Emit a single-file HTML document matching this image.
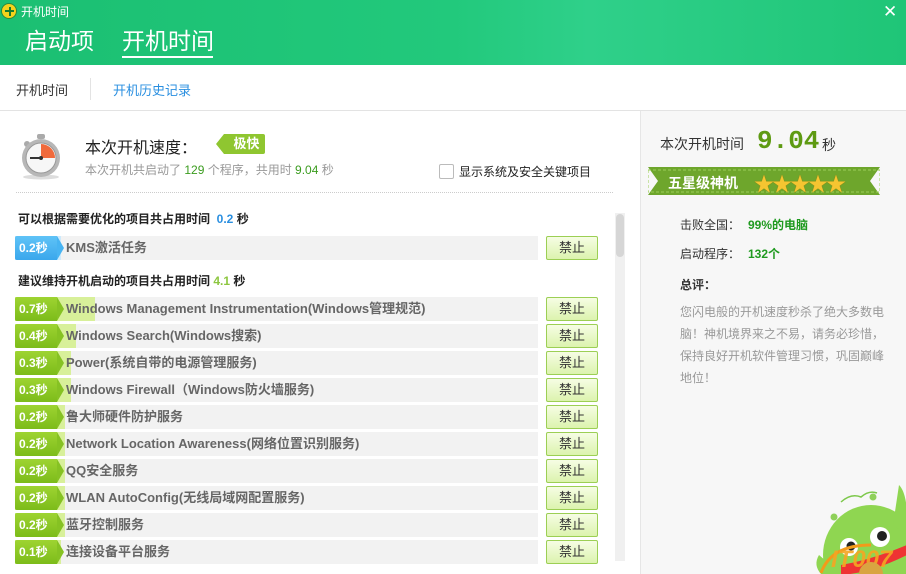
<!DOCTYPE html>
<html><head><meta charset="utf-8"><style>
*{margin:0;padding:0;box-sizing:border-box}
html,body{width:906px;height:574px;overflow:hidden}
body{background:#fff;font-family:"Liberation Sans","Microsoft YaHei","Noto Sans CJK SC",sans-serif;position:relative;color:#333}
.hdr{position:absolute;left:0;top:0;width:906px;height:65px;background:linear-gradient(90deg,#1bbf72 0%,#22c97c 50%,#2fd08a 65%,#1fc577 100%)}
.abs{position:absolute}
.sub{position:absolute;top:65px;left:0;width:906px;height:46px;border-bottom:1px solid #e3e3e3;background:#fff}
.right{position:absolute;left:640px;top:111px;width:266px;height:463px;background:#f7f7f7;border-left:1px solid #e6e6e6;overflow:hidden}
.row{position:absolute;left:15px;width:523px;height:24px;background:#f2f2f2}
.ext{position:absolute;left:0;top:0;height:24px;background:#d8f09a}
.badge{position:absolute;left:0;top:0;width:42px;height:24px;background:linear-gradient(#9ed432,#7cbc1a);color:#fff;font-weight:bold;font-size:12px;line-height:24px;padding-left:4px;border-radius:2px 0 0 2px}
.badge:after{content:"";position:absolute;right:-7px;top:0;border-left:7px solid #86c223;border-top:12px solid transparent;border-bottom:12px solid transparent}
.row .t{position:absolute;left:51px;top:0;line-height:24px;font-size:13px;font-weight:bold;color:#666;white-space:nowrap}
.btn{position:absolute;left:546px;width:52px;height:24px;border:1px solid #9ccf54;background:linear-gradient(#f6fde4,#dcf3ae);font-size:13px;text-align:center;line-height:22px;color:#333;border-radius:2px}
.blue .badge{background:linear-gradient(#5fc3f7,#3aa7ec)}
.blue .badge:after{border-left-color:#48b4f2}
.blue .ext{background:#cdeafc}
</style></head><body>
<div class="hdr"></div>
<div class="abs" style="left:1px;top:3px;width:16px;height:16px;border-radius:50%;background:#f4d21d;border:1px solid #2a8a3a"></div>
<div class="abs" style="left:5px;top:10px;width:9px;height:2px;background:#1a7b2c"></div>
<div class="abs" style="left:8.5px;top:6.5px;width:2px;height:9px;background:#1a7b2c"></div>
<div class="abs" style="left:21px;top:3px;font-size:12px;color:#fff">开机时间</div>
<div class="abs" style="left:883px;top:3px;font-size:17px;color:#fff;line-height:17px">✕</div>
<div class="abs" style="left:25px;top:27px;font-size:23px;line-height:28px;color:#fff">启动项</div>
<div class="abs" style="left:122px;top:27px;font-size:23px;line-height:28px;color:#fff">开机时间</div>
<div class="abs" style="left:122px;top:56px;width:91px;height:2px;background:#fff"></div>
<div class="sub">
<div class="abs" style="left:16px;top:15px;font-size:13px;color:#333">开机时间</div>
<div class="abs" style="left:90px;top:13px;width:1px;height:22px;background:#e3e3e3"></div>
<div class="abs" style="left:113px;top:15px;font-size:13px;color:#2a8fe0">开机历史记录</div>
</div>
<svg class="abs" style="left:18px;top:130px" width="46" height="50" viewBox="0 0 46 50">
<ellipse cx="23" cy="47" rx="18" ry="2.5" fill="#ddd"/>
<rect x="19" y="4" width="8" height="5" rx="2" fill="#aaa"/>
<circle cx="9" cy="14" r="3" fill="#aaa"/>
<circle cx="23" cy="28" r="19" fill="#b7b7b7"/>
<circle cx="23" cy="28" r="15" fill="#f7f7f7" stroke="#999" stroke-width="1"/>
<path d="M23 28 L23 14 A14 14 0 0 1 37 28 Z" fill="#f06a3c"/>
<line x1="23" y1="28" x2="12" y2="28" stroke="#333" stroke-width="2"/>
<circle cx="23" cy="28" r="2" fill="#333"/>
</svg>
<div class="abs" style="left:85px;top:134px;font-size:16px;color:#222">本次开机速度：</div>
<div class="abs" style="left:224px;top:134px;width:41px;height:20px;background:#8fc630;color:#fff;font-weight:bold;font-size:13px;line-height:20px;text-align:center;padding-left:4px;border-radius:0 2px 2px 0">极快</div>
<div class="abs" style="left:216px;top:134px;border-right:8px solid #8fc630;border-top:10px solid transparent;border-bottom:10px solid transparent"></div>
<div class="abs" style="left:85px;top:161px;font-size:12px;color:#999">本次开机共启动了 <span style="color:#3b9c1f">129</span> 个程序，共用时 <span style="color:#3b9c1f">9.04</span> 秒</div>
<div class="abs" style="left:439px;top:164px;width:15px;height:15px;border:1px solid #bbb;border-radius:2px;background:#fff"></div>
<div class="abs" style="left:459px;top:163px;font-size:12px;color:#222">显示系统及安全关键项目</div>
<div class="abs" style="left:16px;top:192px;width:597px;border-top:1px dotted #ccc"></div>
<div class="abs" style="left:18px;top:210px;font-size:12px;font-weight:bold;color:#222">可以根据需要优化的项目共占用时间 &nbsp;<span style="color:#2a8fe0">0.2</span> 秒</div>
<div class="row blue" style="top:236px"><div class="ext" style="width:46px"></div><div class="badge">0.2秒</div><div class="t">KMS激活任务</div></div>
<div class="btn" style="top:236px">禁止</div>
<div class="abs" style="left:18px;top:272px;font-size:12px;font-weight:bold;color:#222">建议维持开机启动的项目共占用时间 <span style="color:#8cc63f">4.1</span> 秒</div>

<div class="row" style="top:297px"><div class="ext" style="width:80px"></div><div class="badge">0.7秒</div><div class="t">Windows Management Instrumentation(Windows管理规范)</div></div><div class="btn" style="top:297px">禁止</div>
<div class="row" style="top:324px"><div class="ext" style="width:61px"></div><div class="badge">0.4秒</div><div class="t">Windows Search(Windows搜索)</div></div><div class="btn" style="top:324px">禁止</div>
<div class="row" style="top:351px"><div class="ext" style="width:56px"></div><div class="badge">0.3秒</div><div class="t">Power(系统自带的电源管理服务)</div></div><div class="btn" style="top:351px">禁止</div>
<div class="row" style="top:378px"><div class="ext" style="width:56px"></div><div class="badge">0.3秒</div><div class="t">Windows Firewall（Windows防火墙服务)</div></div><div class="btn" style="top:378px">禁止</div>
<div class="row" style="top:405px"><div class="ext" style="width:50px"></div><div class="badge">0.2秒</div><div class="t">鲁大师硬件防护服务</div></div><div class="btn" style="top:405px">禁止</div>
<div class="row" style="top:432px"><div class="ext" style="width:50px"></div><div class="badge">0.2秒</div><div class="t">Network Location Awareness(网络位置识别服务)</div></div><div class="btn" style="top:432px">禁止</div>
<div class="row" style="top:459px"><div class="ext" style="width:50px"></div><div class="badge">0.2秒</div><div class="t">QQ安全服务</div></div><div class="btn" style="top:459px">禁止</div>
<div class="row" style="top:486px"><div class="ext" style="width:50px"></div><div class="badge">0.2秒</div><div class="t">WLAN AutoConfig(无线局域网配置服务)</div></div><div class="btn" style="top:486px">禁止</div>
<div class="row" style="top:513px"><div class="ext" style="width:50px"></div><div class="badge">0.2秒</div><div class="t">蓝牙控制服务</div></div><div class="btn" style="top:513px">禁止</div>
<div class="row" style="top:540px"><div class="ext" style="width:46px"></div><div class="badge">0.1秒</div><div class="t">连接设备平台服务</div></div><div class="btn" style="top:540px">禁止</div>

<div class="abs" style="left:615px;top:213px;width:10px;height:348px;background:#f0f0f0"></div>
<div class="abs" style="left:616px;top:214px;width:8px;height:43px;background:#d6d6d6;border-radius:4px"></div>

<div class="right">
<div class="abs" style="left:19px;top:23px;font-size:14px;color:#333">本次开机时间</div>
<div class="abs" style="left:116px;top:15px;font-size:26px;line-height:30px;font-family:'Liberation Mono',monospace;color:#5e9a12;font-weight:bold">9.04</div>
<div class="abs" style="left:181px;top:24px;font-size:14px;color:#333">秒</div>
<svg class="abs" style="left:7px;top:56px" width="232" height="28"><polygon points="0,0 232,0 222,14 232,28 0,28 10,14" fill="#6ea62c"/><rect x="0" y="3" width="232" height="22" fill="none" stroke="#9ccf5a" stroke-dasharray="3 2" stroke-width="1"/></svg>
<div class="abs" style="left:27px;top:62px;font-size:14px;font-weight:bold;color:#fff">五星级神机</div>
<div class="abs" style="left:113px;top:57px;font-size:20px;color:#f5c531;letter-spacing:-2px;text-shadow:0 0 1px #a06a00">★★★★★</div>
<div class="abs" style="left:39px;top:105px;font-size:12px;color:#333">击败全国：</div>
<div class="abs" style="left:107px;top:105px;font-size:12px;font-weight:bold;color:#1f9a1f">99%的电脑</div>
<div class="abs" style="left:39px;top:134px;font-size:12px;color:#333">启动程序：</div>
<div class="abs" style="left:107px;top:134px;font-size:12px;font-weight:bold;color:#1f9a1f">132个</div>
<div class="abs" style="left:39px;top:165px;font-size:12px;font-weight:bold;color:#333">总评：</div>
<div class="abs" style="left:39px;top:190px;width:215px;font-size:12px;line-height:22px;color:#999">您闪电般的开机速度秒杀了绝大多数电脑！神机境界来之不易，请务必珍惜，保持良好开机软件管理习惯，巩固巅峰地位！</div>
<svg class="abs" style="left:170px;top:354px" width="96" height="109" viewBox="0 0 96 109">
<path d="M30 37 Q40 28 50 32 Q58 25 66 28" stroke="#7cc84a" fill="none" stroke-width="1.5"/>
<circle cx="62" cy="32" r="3.5" fill="#8fd05a"/><circle cx="23" cy="52" r="3.5" fill="#8fd05a"/>
<ellipse cx="60" cy="90" rx="48" ry="50" fill="#8fd651"/>
<path d="M88 20 Q98 30 96 70 L82 60 Z" fill="#8fd651"/>
<path d="M8 90 Q2 100 10 109 L30 109 Z" fill="#8fd651"/>
<circle cx="69" cy="72" r="10" fill="#fff"/><circle cx="71" cy="71" r="5" fill="#222"/>
<circle cx="38" cy="82" r="9" fill="#fff"/><circle cx="40" cy="81" r="4.5" fill="#222"/>
<path d="M30 100 Q60 95 96 80 L96 90 Q60 108 30 110 Z" fill="#e33"/>
<path d="M10 108 Q20 80 60 80" stroke="#f39a1a" stroke-width="3" fill="none"/>
<text x="20" y="102" font-family="Liberation Sans" font-style="italic" font-weight="bold" font-size="24" fill="#f5a623" opacity="0.9">IT007</text>
<circle cx="60" cy="109" r="12" fill="#d9a441"/>
</svg>
</div>
</body></html>
